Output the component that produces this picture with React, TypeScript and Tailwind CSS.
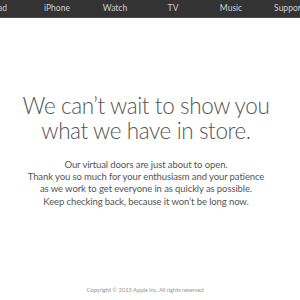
const navItems = ["iPad", "iPhone", "Watch", "TV", "Music", "Support"]

export default function App() {
  return (
    <div className="w-[300px] h-[300px] overflow-hidden bg-white flex flex-col font-['Lato',sans-serif]">
      <nav className="h-[18px] bg-[#333333] border-b border-[#4a4a4a] flex items-center shrink-0 overflow-hidden">
        <ul className="flex items-center -ml-[30px] whitespace-nowrap text-[8.5px] text-[#cfcfcf]">
          {navItems.map((item) => (
            <li key={item} className="w-[58px] shrink-0 text-center">
              {item}
            </li>
          ))}
        </ul>
      </nav>
      <main className="flex flex-col items-center text-center pt-[75px] pr-[8px]">
        <h1 className="whitespace-nowrap text-[22.5px] leading-[25px] font-light tracking-[-0.4px] text-[#555555]">
          We can’t wait to show you
          <br />
          what we have in store.
        </h1>
        <p className="mt-[16px] whitespace-nowrap text-[9.5px] leading-[12.2px] tracking-[-0.1px] text-[#555555]">
          Our virtual doors are just about to open.
          <br />
          Thank you so much for your enthusiasm and your patience
          <br />
          as we work to get everyone in as quickly as possible.
          <br />
          Keep checking back, because it won’t be long now.
        </p>
      </main>
      <footer className="mt-auto pb-[6px] pr-[10px] text-center text-[6px] tracking-[-0.15px] text-[#999999]">
        Copyright © 2015 Apple Inc. All rights reserved
      </footer>
    </div>
  )
}
